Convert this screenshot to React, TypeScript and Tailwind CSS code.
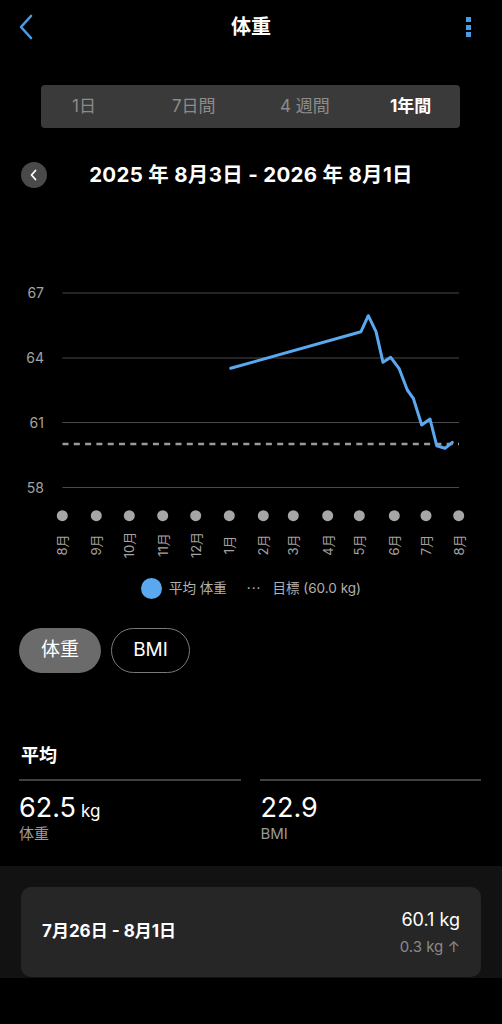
import React from "react";

const FONT = { fontFamily: '"Inter", "Noto Sans CJK JP", sans-serif' };

const months = ["8月", "9月", "10月", "11月", "12月", "1月", "2月", "3月", "4月", "5月", "6月", "7月", "8月"];
const monthX = [62.3, 96.3, 129.3, 162.7, 195.7, 229.3, 263.3, 293.3, 327.7, 359.3, 394.3, 426, 458.7];
const pts: [number, number][] = [
  [230.7, 180.3], [361, 143.7], [368.3, 127.7], [376, 143.7], [383, 174.3], [390.7, 169.3],
  [399, 180.3], [407.3, 202], [413.3, 210.3], [421.7, 237], [430, 231], [436.7, 257.7],
  [445, 260.3], [452.3, 254.3],
];

function Chart() {
  const grid = [
    { v: "67", y: 105 },
    { v: "64", y: 170 },
    { v: "61", y: 234.5 },
    { v: "58", y: 299.5 },
  ];
  return (
    <svg width="502" height="377" viewBox="0 0 502 377" className="block">
      {grid.map((g) => (
        <g key={g.v}>
          <line x1="62.5" x2="459" y1={g.y} y2={g.y} stroke="#4a4a4a" strokeWidth="1" />
          <text x="44" y={g.y + 5} textAnchor="end" fill="#a3a3a3" fontSize="14" style={FONT}>
            {g.v}
          </text>
        </g>
      ))}
      <line x1="62.5" x2="459" y1="256" y2="256" stroke="#9a9a9a" strokeWidth="2.4" strokeDasharray="6 5.3" />
      <polyline
        points={pts.map((p) => p.join(",")).join(" ")}
        fill="none"
        stroke="#5aa8f0"
        strokeWidth="3"
        strokeLinejoin="round"
        strokeLinecap="round"
      />
      {monthX.map((x, i) => (
        <g key={i}>
          <circle cx={x} cy="327.7" r="5.5" fill="#a6a6a6" />
          <text
            x={x}
            y="357"
            textAnchor="middle"
            dominantBaseline="central"
            fill="#a3a3a3"
            fontSize="13"
            transform={`rotate(-90 ${x} 357)`}
            style={FONT}
          >
            {months[i]}
          </text>
        </g>
      ))}
    </svg>
  );
}

export default function App() {
  return (
    <div className="w-[502px] h-[1024px] bg-black text-white overflow-hidden flex flex-col" style={FONT}>
      {/* Header */}
      <div className="h-[54px] flex items-center justify-between px-[16px] relative">
        <svg width="16" height="26" viewBox="0 0 16 26" className="ml-[2px]">
          <path d="M13 2 L3 13 L13 24" fill="none" stroke="#4b9ce8" strokeWidth="2.6" strokeLinecap="round" strokeLinejoin="round" />
        </svg>
        <div className="absolute left-0 right-0 text-center text-[20px] font-bold pointer-events-none">体重</div>
        <div className="flex flex-col gap-[2.5px] mr-[15px]">
          <div className="w-[5px] h-[5px] bg-[#4b9ce8]" />
          <div className="w-[5px] h-[5px] bg-[#4b9ce8]" />
          <div className="w-[5px] h-[5px] bg-[#4b9ce8]" />
        </div>
      </div>

      {/* Segmented control */}
      <div className="mt-[31px] mx-[41px] w-[419px] h-[43px] bg-[#3a3a3a] rounded-[4px] grid grid-cols-[100px_108px_110px_1fr] items-center pl-[31px] text-[17px]">
        <span className="text-[#8c8c8c]">1日</span>
        <span className="text-[#8c8c8c]">7日間</span>
        <span className="text-[#8c8c8c]">4 週間</span>
        <span className="text-white font-bold">1年間</span>
      </div>

      {/* Date row */}
      <div className="mt-[34px] h-[26px] flex items-center relative">
        <div className="ml-[21px] w-[26px] h-[26px] rounded-full bg-[#4a4a4a] flex items-center justify-center">
          <svg width="10" height="12" viewBox="0 0 10 12">
            <path d="M6.5 1.5 L2.5 6 L6.5 10.5" fill="none" stroke="white" strokeWidth="1.8" strokeLinecap="round" strokeLinejoin="round" />
          </svg>
        </div>
        <div className="absolute left-0 right-0 text-center text-[20.5px] font-bold tracking-[0.3px]">
          2025 年 8月3日 - 2026 年 8月1日
        </div>
      </div>

      {/* Chart */}
      <Chart />

      {/* Legend */}
      <div className="mt-[13px] h-[21px] flex items-center justify-center text-[13.5px] text-[#b0b0b0]">
        <div className="w-[21px] h-[21px] rounded-full bg-[#5aa8f0]" />
        <span className="ml-[7px]">平均 体重</span>
        <span className="ml-[20px] tracking-[1px]">···</span>
        <span className="ml-[11px]">目標 (60.0 kg)</span>
      </div>

      {/* Pills */}
      <div className="mt-[29px] flex gap-[10px] px-[19px]">
        <div className="w-[82px] h-[45px] rounded-full bg-[#6b6b6b] flex items-center justify-center text-[19px]">体重</div>
        <div className="w-[79px] h-[45px] rounded-full border border-[#7a7a7a] flex items-center justify-center text-[19px]">BMI</div>
      </div>

      {/* Average */}
      <div className="mt-[72px] px-[21px] text-[18px] font-bold leading-[22px]">平均</div>
      <div className="mt-[12px] pl-[19px] pr-[21px] grid grid-cols-2 gap-[19px]">
        <div>
          <div className="h-[2px] bg-[#404040]" />
          <div className="mt-[13px] flex items-baseline leading-none">
            <span className="text-[27px]">62.5</span>
            <span className="ml-[5px] text-[17px]">kg</span>
          </div>
          <div className="mt-[4px] text-[15px] text-[#9a9a9a] leading-[18px]">体重</div>
        </div>
        <div>
          <div className="h-[2px] bg-[#404040]" />
          <div className="mt-[13px] flex items-baseline leading-none">
            <span className="text-[27px] ml-[1px]">22.9</span>
          </div>
          <div className="mt-[4px] text-[15px] text-[#9a9a9a] leading-[18px] ml-[1px]">BMI</div>
        </div>
      </div>

      {/* Bottom list */}
      <div className="mt-[23px] bg-[#121212] pt-[21px] pb-[1px] px-[21px]">
        <div className="h-[90px] rounded-[10px] bg-[#262626] flex items-center justify-between pl-[21px] pr-[21px]">
          <span className="text-[17px] font-bold">7月26日 - 8月1日</span>
          <div className="flex flex-col items-end">
            <span className="text-[18px] leading-[22px]">60.1 kg</span>
            <span className="mt-[7px] text-[15px] text-[#8a8a8a] leading-[18px]">0.3 kg ↑</span>
          </div>
        </div>
      </div>
    </div>
  );
}
